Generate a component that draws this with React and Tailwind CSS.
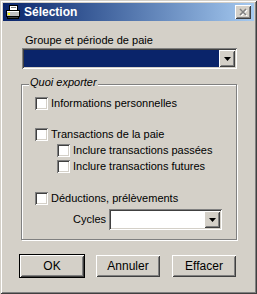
const raised =
  "shadow-[inset_1px_1px_0_#fff,inset_-1px_-1px_0_#404040,inset_2px_2px_0_#d4d0c8,inset_-2px_-2px_0_#808080]";
const sunken =
  "shadow-[inset_1px_1px_0_#808080,inset_-1px_-1px_0_#fff,inset_2px_2px_0_#404040,inset_-2px_-2px_0_#d4d0c8]";

function Arrow() {
  return (
    <svg width="7" height="4" viewBox="0 0 7 4">
      <polygon points="0,0 7,0 3.5,4" fill="#000" />
    </svg>
  );
}

function DropButton() {
  return (
    <div className={`w-[16px] h-[17px] bg-[#d4d0c8] flex items-center justify-center ${raised}`}>
      <Arrow />
    </div>
  );
}

function Checkbox({ label }) {
  return (
    <div className="flex items-center h-[13px]">
      <span className={`w-[13px] h-[13px] bg-white shrink-0 ${sunken}`} />
      <span className="ml-[3px] whitespace-nowrap">{label}</span>
    </div>
  );
}

function PrinterIcon() {
  return (
    <svg width="16" height="16" viewBox="0 0 16 16">
      <rect x="4.5" y="1.5" width="8" height="5" fill="#fff" stroke="#000" />
      <line x1="6" y1="3.5" x2="11" y2="3.5" stroke="#808080" />
      <rect x="1.5" y="6.5" width="13" height="6" fill="#c0c0c0" stroke="#000" />
      <line x1="2" y1="7.5" x2="14" y2="7.5" stroke="#fff" />
      <rect x="3" y="9" width="2" height="2" fill="#ffff00" />
      <rect x="2.5" y="12.5" width="11" height="2" fill="#404040" stroke="#000" />
    </svg>
  );
}

function CloseButton() {
  return (
    <div className={`w-[16px] h-[14px] bg-[#d4d0c8] flex items-center justify-center ${raised}`}>
      <svg width="10" height="8" viewBox="0 0 10 8">
        <path d="M2 1 L8 7 M8 1 L2 7" stroke="#fff" strokeWidth="1.6" transform="translate(1 1)" />
        <path d="M2 1 L8 7 M8 1 L2 7" stroke="#808080" strokeWidth="1.6" />
      </svg>
    </div>
  );
}

function Button({ children, isDefault }) {
  const inner = (
    <div
      className={`w-[64px] h-[22px] bg-[#d4d0c8] flex items-center justify-center text-[12px] ${raised}`}
    >
      {children}
    </div>
  );
  if (isDefault) {
    return <div className="border border-black">{inner}</div>;
  }
  return inner;
}

export default function App() {
  return (
    <div
      className="w-[257px] h-[294px] bg-[#d4d0c8] p-[3px] flex flex-col text-black text-[11px] leading-[13px] font-['Liberation_Sans',Arial,sans-serif] shadow-[inset_1px_1px_0_#d4d0c8,inset_-1px_-1px_0_#404040,inset_2px_2px_0_#fff,inset_-2px_-2px_0_#808080]"
    >
      <div className="h-[18px] bg-gradient-to-r from-[#0a246a] to-[#a6caf0] flex items-center pl-[2px] pr-[3px]">
        <PrinterIcon />
        <span className="ml-[3px] text-white font-bold text-[12px]">Sélection</span>
        <div className="ml-auto">
          <CloseButton />
        </div>
      </div>

      <p className="mt-[13px] ml-[22px]">Groupe et période de paie</p>

      <div className={`mt-[1px] ml-[19px] w-[215px] h-[21px] bg-white p-[2px] flex ${sunken}`}>
        <div className="flex-1 bg-[#0a246a]" />
        <DropButton />
      </div>

      <div className="mt-[15px] ml-[18px] w-[216px] h-[156px] relative border border-[#808080] shadow-[1px_1px_0_#fff,inset_1px_1px_0_#fff]">
        <span className="absolute -top-[9px] left-[7px] px-[1px] bg-[#d4d0c8] italic">
          Quoi exporter
        </span>
        <div className="flex flex-col pl-[13px]">
          <div className="mt-[12px]">
            <Checkbox label="Informations personnelles" />
          </div>
          <div className="mt-[18px]">
            <Checkbox label="Transactions de la paie" />
          </div>
          <div className="mt-[3px] ml-[22px]">
            <Checkbox label="Inclure transactions passées" />
          </div>
          <div className="mt-[3px] ml-[22px]">
            <Checkbox label="Inclure transactions futures" />
          </div>
          <div className="mt-[19px]">
            <Checkbox label="Déductions, prélèvements" />
          </div>
          <div className="mt-[4px] ml-[38px] flex items-center">
            <span>Cycles</span>
            <div className={`ml-[3px] w-[113px] h-[21px] bg-white p-[2px] flex justify-end ${sunken}`}>
              <DropButton />
            </div>
          </div>
        </div>
      </div>

      <div className="mt-[14px] ml-[16px] flex items-center">
        <Button isDefault>OK</Button>
        <div className="ml-[11px]">
          <Button>Annuler</Button>
        </div>
        <div className="ml-[12px]">
          <Button>Effacer</Button>
        </div>
      </div>
    </div>
  );
}
